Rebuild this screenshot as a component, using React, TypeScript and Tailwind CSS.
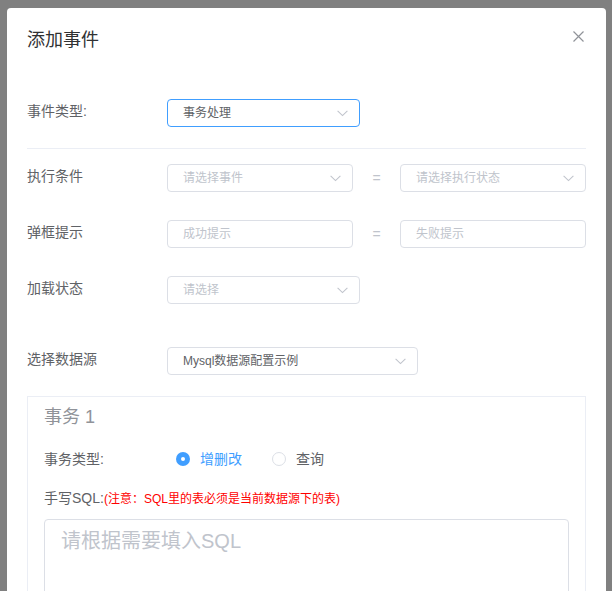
import React from 'react';

const FONT = { fontFamily: '"Liberation Sans", "Noto Sans CJK SC", sans-serif' };

interface FieldProps {
  width: string;
  text: string;
  placeholder?: boolean;
  arrow?: boolean;
  focused?: boolean;
}

const Chevron = () => (
  <svg width="11" height="7" viewBox="0 0 11 7" fill="none" className="shrink-0">
    <path d="M0.6 0.8 L5.5 5.6 L10.4 0.8" stroke="#c0c4cc" strokeWidth="1.1" />
  </svg>
);

const Field: React.FC<FieldProps> = ({ width, text, placeholder, arrow, focused }) => (
  <div
    className={`${width} h-7 shrink-0 flex items-center justify-between rounded pl-[15px] pr-[11px] border bg-white ${
      focused ? 'border-[#409eff]' : 'border-[#dcdfe6]'
    }`}
  >
    <span className={`text-xs leading-none ${placeholder ? 'text-[#c0c4cc]' : 'text-[#606266]'}`}>{text}</span>
    {arrow && <Chevron />}
  </div>
);

const Label: React.FC<{ text: string }> = ({ text }) => (
  <div className="w-[140px] shrink-0 mb-1 text-sm text-[#606266] leading-5">{text}</div>
);

const Equals = () => <div className="w-[47px] shrink-0 text-center text-sm text-[#c0c4cc]">=</div>;

const Radio: React.FC<{ label: string; checked?: boolean }> = ({ label, checked }) => (
  <div className="flex items-center">
    {checked ? (
      <span className="w-[14px] h-[14px] rounded-full bg-[#409eff] flex items-center justify-center">
        <span className="w-1 h-1 rounded-full bg-white" />
      </span>
    ) : (
      <span className="w-[14px] h-[14px] rounded-full border border-[#dcdfe6] bg-white" />
    )}
    <span className={`ml-[10px] text-sm leading-5 ${checked ? 'text-[#409eff]' : 'text-[#606266]'}`}>{label}</span>
  </div>
);

export default function App() {
  return (
    <div className="w-[612px] h-[591px] overflow-hidden bg-[#808080] pt-2 pl-[7px] pr-[6px]" style={FONT}>
      <div className="relative bg-white rounded-sm min-h-[600px]">
        {/* header */}
        <div className="pt-5 px-5">
          <div className="text-lg leading-6 text-[#303133]">添加事件</div>
        </div>
        <button className="absolute top-[22px] right-[22px] w-3 h-3 flex items-center justify-center">
          <svg width="11" height="11" viewBox="0 0 11 11" fill="none">
            <path d="M0.5 0.5 L10.5 10.5 M10.5 0.5 L0.5 10.5" stroke="#909399" strokeWidth="1.2" />
          </svg>
        </button>

        {/* body */}
        <div className="px-5 pt-[47px]">
          <div className="flex items-center h-7">
            <Label text="事件类型:" />
            <Field width="w-[193px]" text="事务处理" arrow focused />
          </div>

          <div className="mt-[21px] h-px bg-[#ebeef5]" />

          <div className="mt-[15px] flex items-center h-7">
            <Label text="执行条件" />
            <Field width="w-[186px]" text="请选择事件" placeholder arrow />
            <Equals />
            <Field width="w-[186px]" text="请选择执行状态" placeholder arrow />
          </div>

          <div className="mt-7 flex items-center h-7">
            <Label text="弹框提示" />
            <Field width="w-[186px]" text="成功提示" placeholder />
            <Equals />
            <Field width="w-[186px]" text="失败提示" placeholder />
          </div>

          <div className="mt-7 flex items-center h-7">
            <Label text="加载状态" />
            <Field width="w-[193px]" text="请选择" placeholder arrow />
          </div>

          <div className="mt-[43px] flex items-center h-7">
            <Label text="选择数据源" />
            <Field width="w-[251px]" text="Mysql数据源配置示例" arrow />
          </div>

          {/* transaction card */}
          <div className="mt-[21px] border border-[#ebeef5] px-4 pt-2 pb-6">
            <div className="text-lg leading-6 text-[#909399]">事务 1</div>

            <div className="mt-4 h-7 flex items-center">
              <div className="w-[132px] shrink-0 text-sm text-[#606266]">事务类型:</div>
              <div className="flex items-center gap-[30px]">
                <Radio label="增删改" checked />
                <Radio label="查询" />
              </div>
            </div>

            <div className="mt-[15px] leading-5 text-sm text-[#606266]">
              手写SQL:<span className="text-xs text-[#ff0000]">(注意：SQL里的表必须是当前数据源下的表)</span>
            </div>

            <div className="mt-[11px] h-[120px] border border-[#dcdfe6] rounded px-4 pt-[7px]">
              <div className="text-xl leading-7 text-[#c0c4cc]">请根据需要填入SQL</div>
            </div>
          </div>
        </div>
      </div>
    </div>
  );
}
